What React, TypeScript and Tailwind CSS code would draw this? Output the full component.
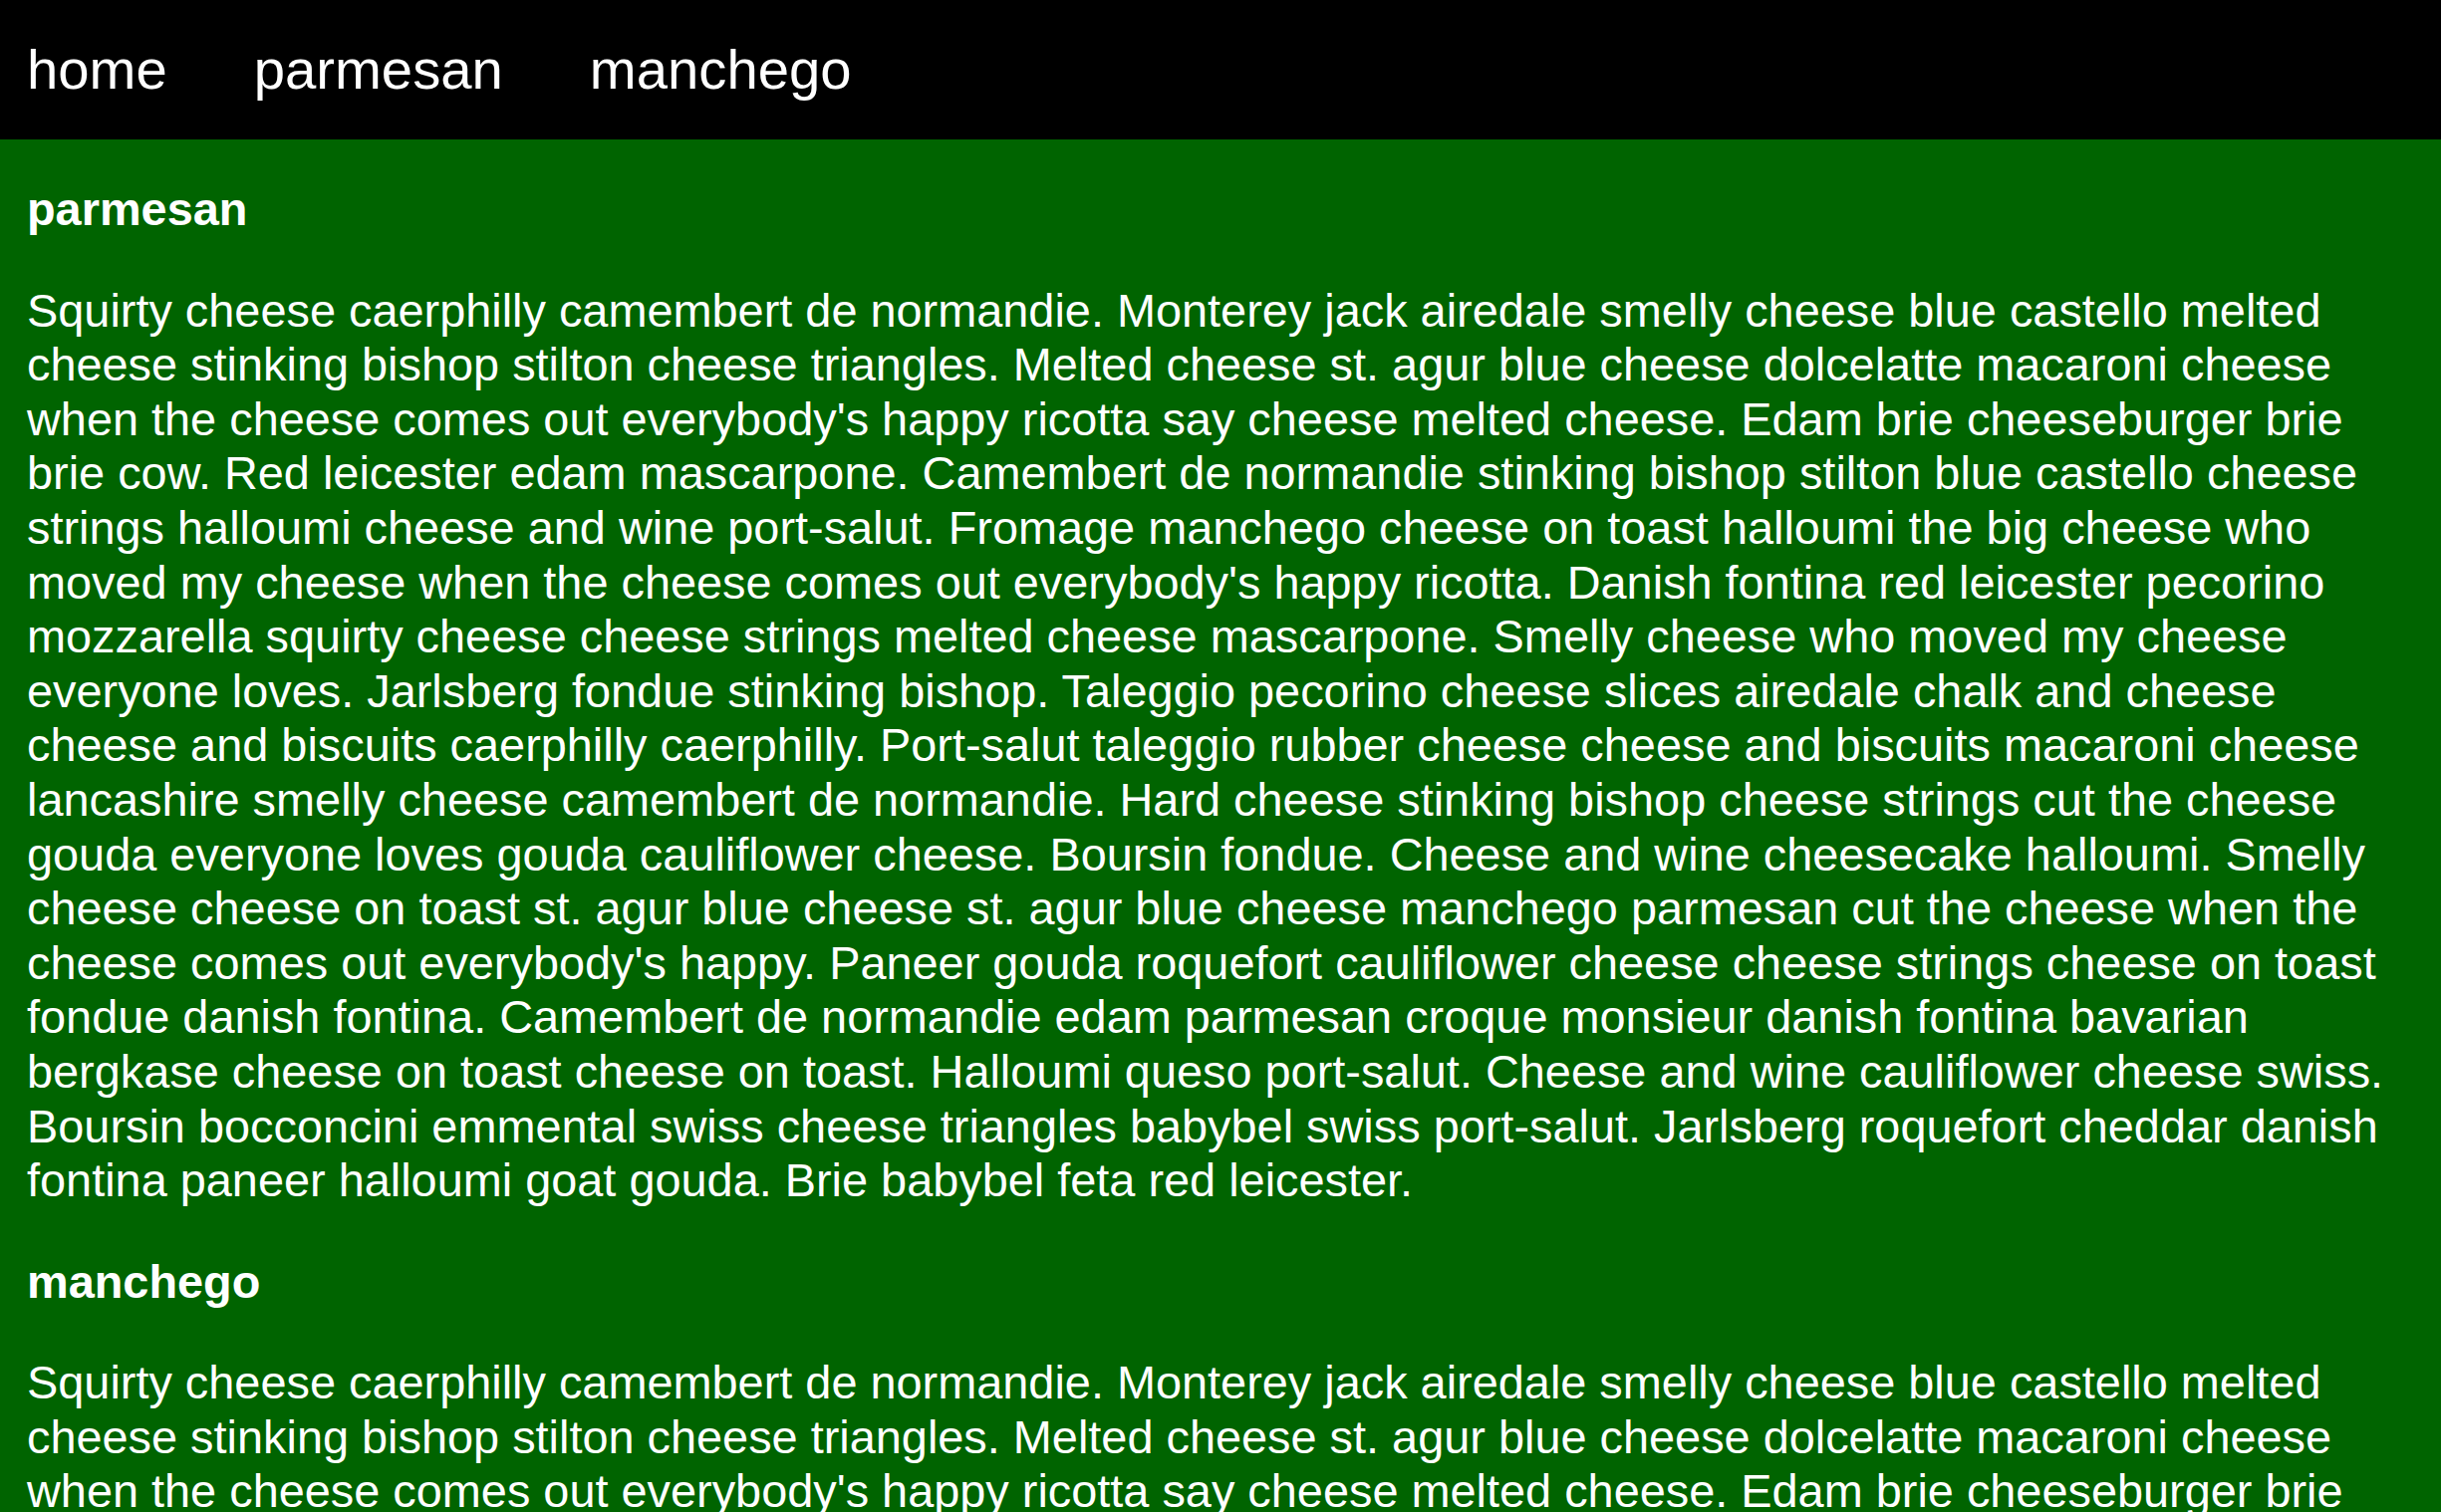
const cheeseText =
  "Squirty cheese caerphilly camembert de normandie. Monterey jack airedale smelly cheese blue castello melted cheese stinking bishop stilton cheese triangles. Melted cheese st. agur blue cheese dolcelatte macaroni cheese when the cheese comes out everybody's happy ricotta say cheese melted cheese. Edam brie cheeseburger brie brie cow. Red leicester edam mascarpone. Camembert de normandie stinking bishop stilton blue castello cheese strings halloumi cheese and wine port-salut. Fromage manchego cheese on toast halloumi the big cheese who moved my cheese when the cheese comes out everybody's happy ricotta. Danish fontina red leicester pecorino mozzarella squirty cheese cheese strings melted cheese mascarpone. Smelly cheese who moved my cheese everyone loves. Jarlsberg fondue stinking bishop. Taleggio pecorino cheese slices airedale chalk and cheese cheese and biscuits caerphilly caerphilly. Port-salut taleggio rubber cheese cheese and biscuits macaroni cheese lancashire smelly cheese camembert de normandie. Hard cheese stinking bishop cheese strings cut the cheese gouda everyone loves gouda cauliflower cheese. Boursin fondue. Cheese and wine cheesecake halloumi. Smelly cheese cheese on toast st. agur blue cheese st. agur blue cheese manchego parmesan cut the cheese when the cheese comes out everybody's happy. Paneer gouda roquefort cauliflower cheese cheese strings cheese on toast fondue danish fontina. Camembert de normandie edam parmesan croque monsieur danish fontina bavarian bergkase cheese on toast cheese on toast. Halloumi queso port-salut. Cheese and wine cauliflower cheese swiss. Boursin bocconcini emmental swiss cheese triangles babybel swiss port-salut. Jarlsberg roquefort cheddar danish fontina paneer halloumi goat gouda. Brie babybel feta red leicester."

const links = ['home', 'parmesan', 'manchego']
const sections = ['parmesan', 'manchego']

export default function App() {
  return (
    <div className="min-h-screen bg-[#006400] text-white font-['Liberation_Sans',Arial,sans-serif]">
      <nav className="h-[140px] bg-black flex items-center gap-[87px] px-[27px]">
        {links.map(link => (
          <a key={link} href="#" className="text-[56.25px] leading-none text-white">
            {link}
          </a>
        ))}
      </nav>
      <main className="px-[27px] pt-[43px] text-[46.875px] leading-[54.6px]">
        {sections.map(name => (
          <section key={name}>
            <h2 className="font-bold mb-[47px]">{name}</h2>
            <p className="mb-[47px]">{cheeseText}</p>
          </section>
        ))}
      </main>
    </div>
  )
}
